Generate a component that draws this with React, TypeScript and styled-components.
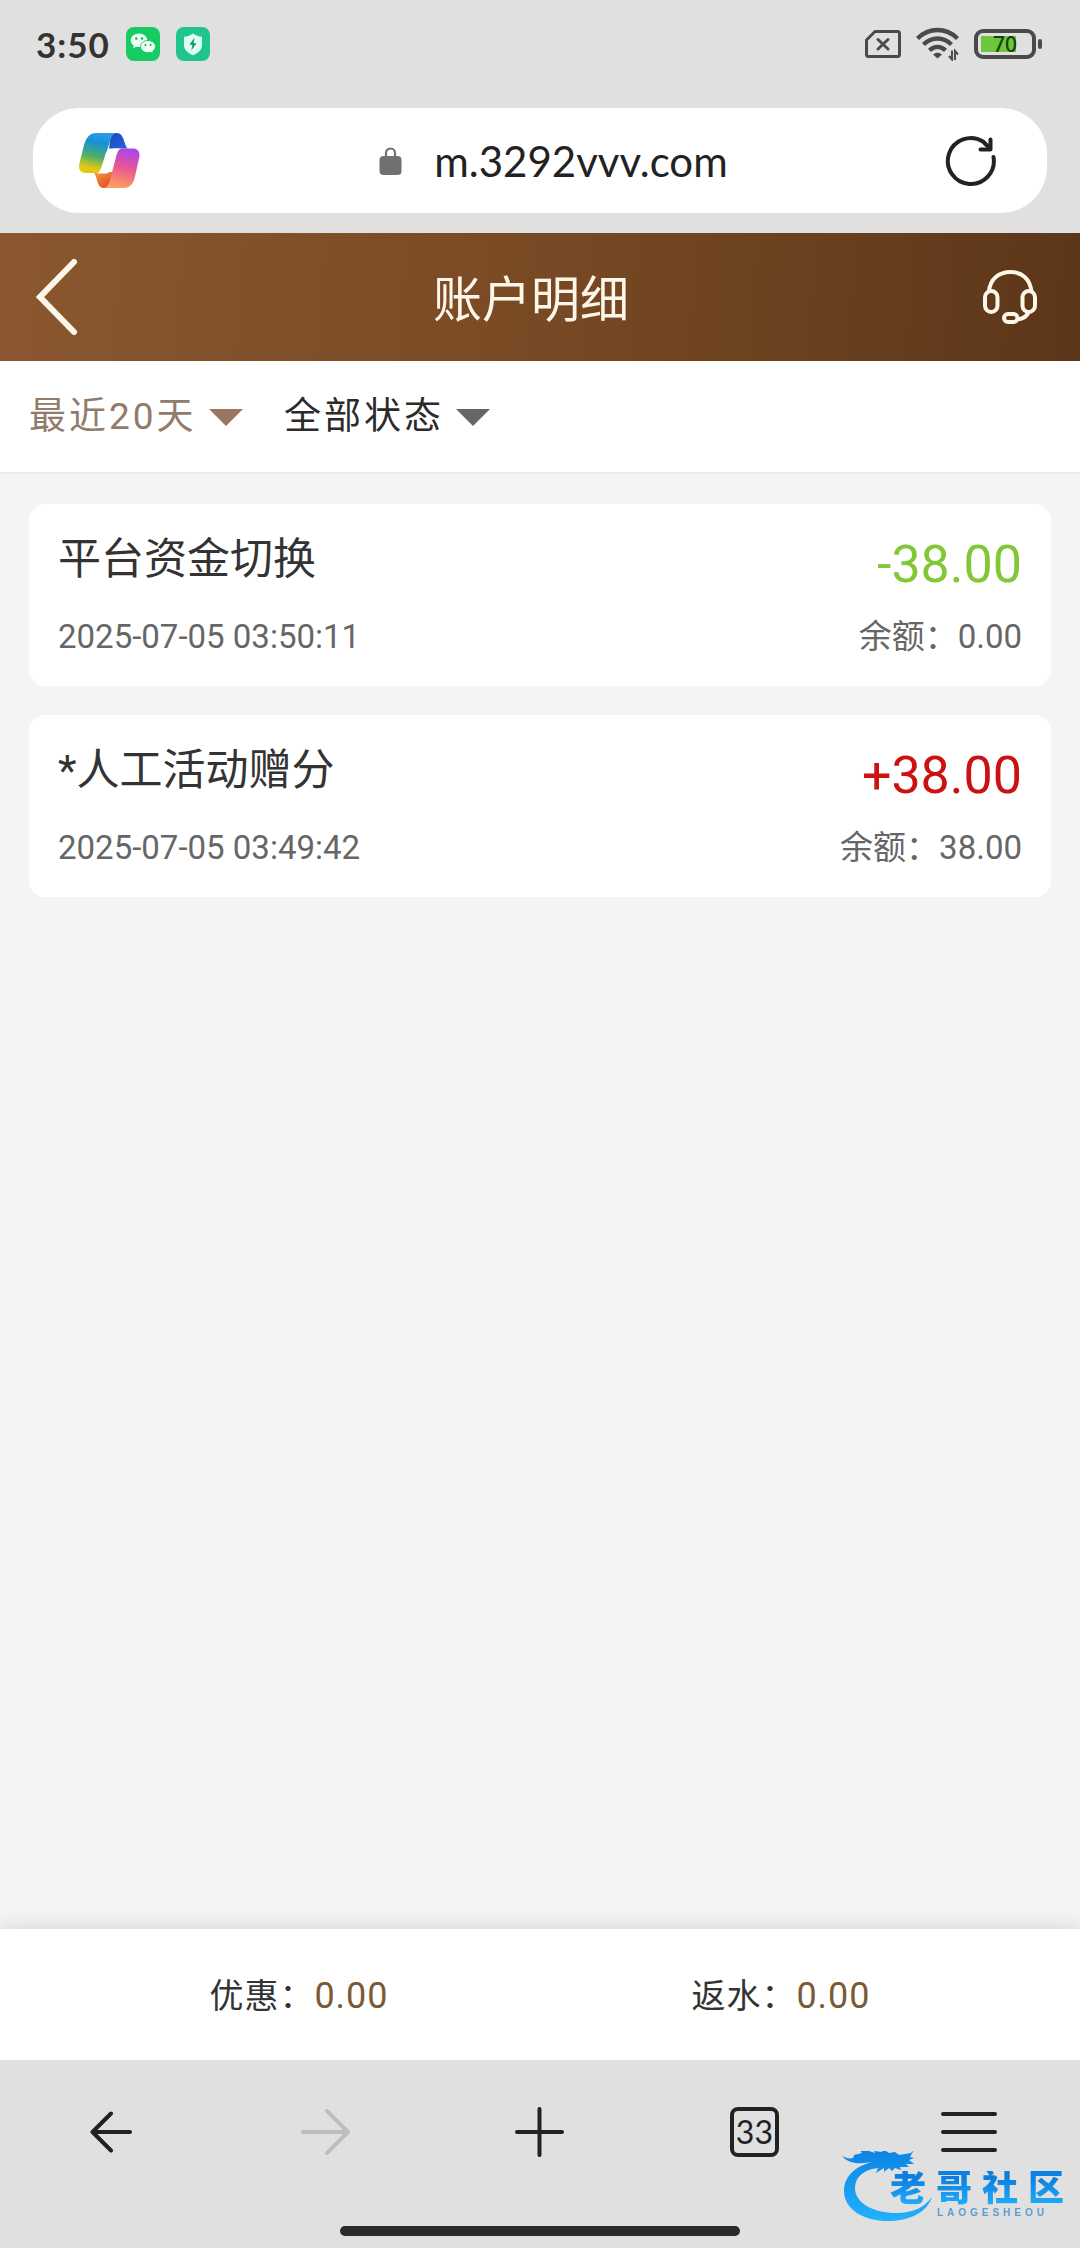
import React from "react";
import styled, { createGlobalStyle } from "styled-components";

const chrome = "#e0e0e0";
const ink = "#222222";
const cream = "#fff6ea";
const uiFont = `Roboto, "Noto Sans CJK SC", sans-serif`;
const systemFont = `Lato, "Noto Sans CJK SC", sans-serif`;

const GlobalStyle = createGlobalStyle`
  *, *::before, *::after { box-sizing: border-box; }
  body { margin: 0; background: #f3f4f6; font-family: ${uiFont}; }
  button, select { font: inherit; color: inherit; border: 0; background: none; padding: 0; margin: 0; }
  h1, h2, p, ul, dl, dd { margin: 0; padding: 0; font-weight: 400; }
  svg { display: block; }
`;

const Page = styled.div`
  position: relative;
  display: flex;
  flex-direction: column;
  min-height: 100vh;
`;

/* ---------- system status bar and address bar ---------- */

const BrowserTop = styled.header`
  background: ${chrome};
  padding-bottom: 20px;
`;

const StatusBar = styled.div`
  display: flex;
  align-items: center;
  justify-content: space-between;
  height: 88px;
  padding: 0 38px 0 36px;
`;

const StatusGroup = styled.div<{ $gap: number }>`
  display: flex;
  align-items: center;
  gap: ${(p) => p.$gap}px;
`;

const Clock = styled.time`
  font-family: ${systemFont};
  font-size: 35px;
  font-weight: 700;
  line-height: 40px;
  color: #333333;
  letter-spacing: 1px;
`;

const Battery = styled.div`
  display: flex;
  align-items: center;
  gap: 2px;
`;

const BatteryBody = styled.div`
  display: grid;
  place-items: center;
  width: 62px;
  height: 30px;
  border: 4px solid #4a4a4a;
  border-radius: 9px;
  font-family: "Noto Sans", sans-serif;
  font-size: 21px;
  font-weight: 500;
  line-height: 22px;
  color: #17400c;
  background: linear-gradient(90deg, #6cc83a 35px, transparent 35px) 3px 3px / 46px 16px no-repeat;
`;

const BatteryTip = styled.div`
  width: 4px;
  height: 10px;
  border-radius: 2px;
  background: #4a4a4a;
`;

const AddressBar = styled.div`
  display: flex;
  align-items: center;
  height: 105px;
  margin: 20px 33px 0;
  padding: 0 50px 0 46px;
  border-radius: 46px;
  background: #ffffff;
`;

const Address = styled.button`
  flex: 1;
  display: flex;
  align-items: center;
  justify-content: center;
  gap: 32px;
  padding-left: 22px;
  font-family: ${systemFont};
  font-size: 42px;
  line-height: 48px;
  color: ${ink};
`;

/* ---------- page header ---------- */

const TitleBar = styled.div`
  display: flex;
  align-items: center;
  justify-content: space-between;
  height: 128px;
  padding: 0 43px 0 36px;
  background: linear-gradient(95deg, #8a5730 0%, #7a4b25 45%, #6a401e 75%, #5c361a 100%);
  color: ${cream};
`;

const Title = styled.h1`
  padding-top: 8px;
  font-size: 49px;
  line-height: 60px;
`;

const Filters = styled.form`
  display: flex;
  gap: 41px;
  padding: 32px 29px 31px;
  background: #ffffff;
  border-bottom: 2px solid #ebecee;
`;

const Filter = styled.label<{ $color: string }>`
  display: flex;
  align-items: center;
  gap: 12px;
  color: ${(p) => p.$color};
`;

const FilterSelect = styled.select`
  appearance: none;
  font-size: 37px;
  line-height: 48px;
  letter-spacing: 3px;
`;

/* ---------- transaction list ---------- */

const Content = styled.main`
  flex: 1;
  padding: 30px 29px;
`;

const RecordList = styled.ul`
  display: flex;
  flex-direction: column;
  gap: 29px;
  list-style: none;
`;

const Record = styled.li`
  display: flex;
  flex-direction: column;
  gap: 12px;
  padding: 25px 29px 21px;
  border-radius: 16px;
  background: #ffffff;
`;

const RecordRow = styled.div`
  display: flex;
  align-items: flex-end;
  justify-content: space-between;
`;

const RecordTitle = styled.h2`
  font-size: 43px;
  line-height: 60px;
  padding-bottom: 8px;
  color: #333333;
`;

const Amount = styled.span<{ $positive: boolean }>`
  font-size: 52px;
  line-height: 64px;
  color: ${(p) => (p.$positive ? "#cc1111" : "#82c836")};
`;

const Meta = styled.span`
  font-size: 33px;
  line-height: 56px;
  color: #666666;
`;

/* ---------- totals ---------- */

const Totals = styled.dl`
  display: grid;
  grid-template-columns: 1fr 1fr;
  padding: 43px 58px 40px;
  background: #ffffff;
  box-shadow: 0 0 20px rgba(0, 0, 0, 0.14);
`;

const Total = styled.div`
  display: flex;
  justify-content: center;
  line-height: 48px;
`;

const TotalLabel = styled.dt`
  font-size: 34px;
  letter-spacing: 1px;
  color: #333333;
`;

const TotalValue = styled.dd`
  font-size: 36px;
  letter-spacing: 1px;
  color: #7b5937;
`;

/* ---------- browser toolbar ---------- */

const BrowserBottom = styled.footer`
  position: relative;
  padding-bottom: 12px;
  background: ${chrome};
`;

const Toolbar = styled.nav`
  display: grid;
  grid-template-columns: repeat(5, 1fr);
  padding: 33px 4px 0;
`;

const ToolButton = styled.button`
  display: grid;
  place-items: center;
  height: 78px;
  color: ${ink};

  &:disabled {
    color: #bdbdbd;
  }
`;

const TabCount = styled.span`
  display: grid;
  place-items: center;
  width: 49px;
  height: 50px;
  border: 4px solid ${ink};
  border-radius: 8px;
  font-family: ${systemFont};
  font-size: 32px;
  line-height: 40px;
`;

const HomeIndicator = styled.div`
  width: 37%;
  height: 10px;
  margin: 55px auto 0;
  border-radius: 5px;
  background: #2b2b2b;
`;

const IconButton = styled.button`
  display: grid;
  place-items: center;
`;

const Watermark = styled.div`
  position: absolute;
  right: 16px;
  bottom: 25px;
  display: flex;
  flex-direction: column;
  align-items: flex-end;
  width: 224px;
  height: 72px;
  padding-top: 20px;
  pointer-events: none;
`;

const WatermarkDragon = styled.svg`
  position: absolute;
  inset: 0;
`;

const WatermarkText = styled.div`
  position: relative;
  display: flex;
  gap: 10px;
  font-family: "Liberation Sans", "Noto Sans CJK SC", sans-serif;
  font-size: 36px;
  font-weight: 900;
  line-height: 36px;
  color: transparent;
  background: linear-gradient(#0c7fe0 20%, #20aaf8 90%);
  background-clip: text;
`;

const WatermarkLatin = styled.div`
  position: relative;
  padding-right: 16px;
  font-family: "Liberation Sans", sans-serif;
  font-size: 10px;
  font-weight: 700;
  line-height: 12px;
  letter-spacing: 4px;
  color: #5b9fd2;
`;

/* ---------- icons ---------- */

const WeChatIcon = () => (
  <svg width="34" height="34" viewBox="0 0 34 34" role="img" aria-label="WeChat">
    <rect width="34" height="34" rx="8" fill="#14cc62" />
    <path d="M13 6.500c-4.600 0-8.300 3-8.300 6.800 0 2.100 1.200 4 3.100 5.300l-.8 2.700 3.100-1.600c.9.300 1.900.4 2.900.4 4.600 0 8.300-3 8.300-6.800S17.600 6.500 13 6.500z" fill="#effff5" />
    <path d="M22 13.500c-4.200 0-7.500 2.700-7.500 6.100s3.300 6.100 7.500 6.100c.9 0 1.800-.1 2.600-.4l2.700 1.500-.7-2.400c1.700-1.100 2.900-2.800 2.900-4.800 0-3.400-3.300-6.100-7.500-6.100z" fill="#effff5" stroke="#14cc62" strokeWidth="1" />
    <g fill="#14a855">
      <circle cx="10.300" cy="11.500" r="1.200" />
      <circle cx="16" cy="11.500" r="1.200" />
      <circle cx="19.500" cy="18" r="1" />
      <circle cx="24.500" cy="18" r="1" />
    </g>
  </svg>
);

const ShieldIcon = () => (
  <svg width="34" height="34" viewBox="0 0 34 34" role="img" aria-label="Security">
    <rect width="34" height="34" rx="8" fill="#20c48e" />
    <path d="M17 6.500c2.600 2 5.500 3 9 3.300v8.700c0 4.500-4 7.500-9 9.800-5-2.300-9-5.300-9-9.800V9.800c3.500-.3 6.400-1.300 9-3.300z" fill="#dcfff3" />
    <path d="M18.500 10.500l-5 7.300h3l-1.200 5.700 5.200-7.300h-3z" fill="#178f69" />
  </svg>
);

const SimIcon = () => (
  <svg width="36" height="28" viewBox="0 0 36 28" fill="none" stroke="#4a4a4a" strokeWidth="3" strokeLinejoin="round" aria-hidden="true">
    <path d="M10 1.500h22.500a2 2 0 0 1 2 2v21a2 2 0 0 1-2 2h-29a2 2 0 0 1-2-2V10z" />
    <path d="M13 9.500l10 9.500M23 9.500l-10 9.500" strokeLinecap="round" />
  </svg>
);

const WifiIcon = () => (
  <svg width="43" height="34" viewBox="0 0 43 34" fill="none" stroke="#4a4a4a" strokeWidth="4.400" aria-hidden="true">
    <path d="M1.500 11.500C13 .2 30 .2 41.500 11.500" />
    <path d="M7.500 17.500c8.500-8 19.500-8 28 0" />
    <path d="M13.500 23.300c5-4.600 11-4.600 16 0" />
    <path d="M17 27.500c2.700-2.200 6.300-2.200 9 0L21.500 31.500z" fill="#4a4a4a" stroke="none" />
    <path d="M36 23.500v9l-3-3.500M39 33v-9l3 3.500" strokeWidth="2" />
  </svg>
);

const CopilotIcon = () => (
  <svg width="61" height="57" viewBox="0 0 61 57" aria-hidden="true">
    <defs>
      <linearGradient id="cpLeft" x1="0.600" y1="0" x2="0.400" y2="1">
        <stop offset="0" stopColor="#2b9fe6" />
        <stop offset="0.250" stopColor="#168fd8" />
        <stop offset="0.600" stopColor="#4bb06a" />
        <stop offset="0.900" stopColor="#e2ca12" />
      </linearGradient>
      <linearGradient id="cpTop" x1="0" y1="0" x2="1" y2="1">
        <stop offset="0" stopColor="#1b48b8" />
        <stop offset="1" stopColor="#2a62e4" />
      </linearGradient>
      <linearGradient id="cpRight" x1="0.600" y1="0" x2="0.400" y2="1">
        <stop offset="0" stopColor="#a848ea" />
        <stop offset="0.450" stopColor="#e85598" />
        <stop offset="1" stopColor="#ffa05a" />
      </linearGradient>
      <linearGradient id="cpBottom" x1="0" y1="0" x2="1" y2="1">
        <stop offset="0" stopColor="#f8a038" />
        <stop offset="1" stopColor="#d83a28" />
      </linearGradient>
    </defs>
    <path d="M32 1h5c4 0 6 2 7.500 6l2 6c.7 2 1.500 3.300 3 3.500H30z" fill="url(#cpTop)" />
    <path d="M14 40c1.500 1 2.200 2.500 3 5l1.500 5c1.500 4.500 3 6 7 6h4l8-16z" fill="url(#cpBottom)" />
    <path d="M17 1h22c-5 0-6.500 3-8 8l-7 23c-2 6-3.500 9-7 9H7c-6 0-8-4-6.500-10L5 13C7.500 5 11 1 17 1z" fill="url(#cpLeft)" />
    <path d="M45 56H23c5 0 6.500-3 8-8l6-23c1.600-6 3-8.500 7-8.500h9.500c6 0 8 4 6.500 10l-4 18C54.300 52 51 56 45 56z" fill="url(#cpRight)" />
    <path d="M38 16.500h5c-4 0-5.400 2.500-7 8.500l-3 10c-1.300 4-3 6.500-7 6.500h-9c3.500-.5 4.500-3.500 6.500-9.500l3-10c1.300-4 5-5.500 11.500-5.500z" fill="#ffffff" />
  </svg>
);

const LockIcon = () => (
  <svg width="23" height="28" viewBox="0 0 23 28" aria-hidden="true">
    <rect x="0.500" y="9" width="22" height="19" rx="4" fill="#707070" />
    <path d="M7 10V6a4.500 4.500 0 0 1 9 0v4" fill="none" stroke="#707070" strokeWidth="2.200" />
  </svg>
);

const ReloadIcon = () => (
  <svg width="52" height="52" viewBox="0 0 52 52" fill="none" stroke={ink} strokeWidth="4" strokeLinecap="round" strokeLinejoin="round" aria-hidden="true">
    <path d="M48.500 22A23 23 0 1 1 38 6.500L45 13.500" />
    <path d="M45.500 4.500v10h-10" />
  </svg>
);

const ChevronIcon = () => (
  <svg width="43" height="76" viewBox="0 0 43 76" fill="none" stroke={cream} strokeWidth="6" strokeLinecap="round" aria-hidden="true">
    <path d="M38 3L4 38l34 35" />
  </svg>
);

const HeadsetIcon = () => (
  <svg width="54" height="54" viewBox="0 0 54 54" fill="none" stroke={cream} strokeWidth="4" aria-hidden="true">
    <path d="M6 21.500C7 9 16 2 27.500 2S47 9 48.500 21.500" />
    <rect x="2" y="21" width="12.500" height="21" rx="6.200" />
    <rect x="39.500" y="21" width="12.500" height="21" rx="6.200" />
    <rect x="21" y="44" width="13.500" height="8" rx="4" />
    <path d="M34.500 49.500c5-.5 9.500-3 11.500-8" />
  </svg>
);

const Triangle = ({ color }: { color: string }) => (
  <svg width="34" height="17" viewBox="0 0 34 17" aria-hidden="true">
    <path d="M0 0h34L17 17z" fill={color} />
  </svg>
);

const stroke = {
  fill: "none",
  stroke: "currentColor",
  strokeWidth: 4,
  strokeLinecap: "round" as const,
  strokeLinejoin: "round" as const,
  "aria-hidden": true,
};

const BackIcon = () => (
  <svg width="43" height="42" viewBox="0 0 43 42" {...stroke}>
    <path d="M40 21H3M21 2.500L2.500 21 21 39.500" />
  </svg>
);

const ForwardIcon = () => (
  <svg width="50" height="46" viewBox="0 0 50 46" {...stroke}>
    <path d="M2 23h45M26 2l21 21-21 21" />
  </svg>
);

const PlusIcon = () => (
  <svg width="49" height="50" viewBox="0 0 49 50" {...stroke}>
    <path d="M2 25h45M24.500 2v46" />
  </svg>
);

const MenuIcon = () => (
  <svg width="56" height="42" viewBox="0 0 56 42" {...stroke}>
    <path d="M2 3h52M2 21h52M2 39h52" />
  </svg>
);

const Dragon = () => (
  <WatermarkDragon width="224" height="72" viewBox="0 0 224 72" aria-hidden="true">
    <defs>
      <linearGradient id="dragon" x1="0" y1="0" x2="0" y2="1">
        <stop offset="0" stopColor="#0c82e4" />
        <stop offset="1" stopColor="#22b2fc" />
      </linearGradient>
    </defs>
    <path
      fill="url(#dragon)"
      d="M32 11C13 16 4 27 4 40c0 19 21 31 47 30 20-1 36-9 41-24-8 11-20 16-35 16-24 0-42-10-42-25 0-9 6-16 17-19l6-1-2 5 8-5 0 4 5-4 3 3 3-3 6 2-1-3 9 0-3-3 8 0-5-4 5-2-4-1 4-7-3 3-12 2-4-3-6 1-6-4-1 3-8-1 1 2-9-3-8-2 4 5-8 2C14 9 8 8 2 5c5 6 13 8 22 7z"
    />
  </WatermarkDragon>
);

/* ---------- data ---------- */

const records = [
  { title: "平台资金切换", time: "2025-07-05 03:50:11", amount: "-38.00", balance: "0.00" },
  { title: "*人工活动赠分", time: "2025-07-05 03:49:42", amount: "+38.00", balance: "38.00" },
];

const totals = [
  { label: "优惠：", value: "0.00" },
  { label: "返水：", value: "0.00" },
];

export default function App() {
  return (
    <Page>
      <GlobalStyle />
      <BrowserTop>
        <StatusBar>
          <StatusGroup $gap={16}>
            <Clock>3:50</Clock>
            <WeChatIcon />
            <ShieldIcon />
          </StatusGroup>
          <StatusGroup $gap={15}>
            <SimIcon />
            <WifiIcon />
            <Battery>
              <BatteryBody>70</BatteryBody>
              <BatteryTip />
            </Battery>
          </StatusGroup>
        </StatusBar>
        <AddressBar>
          <IconButton aria-label="Copilot">
            <CopilotIcon />
          </IconButton>
          <Address>
            <LockIcon />
            <span>m.3292vvv.com</span>
          </Address>
          <IconButton aria-label="Reload">
            <ReloadIcon />
          </IconButton>
        </AddressBar>
      </BrowserTop>

      <TitleBar>
        <IconButton aria-label="返回">
          <ChevronIcon />
        </IconButton>
        <Title>账户明细</Title>
        <IconButton aria-label="客服">
          <HeadsetIcon />
        </IconButton>
      </TitleBar>

      <Filters>
        <Filter $color="#937b6b">
          <FilterSelect aria-label="时间">
            <option>最近20天</option>
          </FilterSelect>
          <Triangle color="#9a7560" />
        </Filter>
        <Filter $color="#2b2b2b">
          <FilterSelect aria-label="状态">
            <option>全部状态</option>
          </FilterSelect>
          <Triangle color="#666666" />
        </Filter>
      </Filters>

      <Content>
        <RecordList>
          {records.map((r) => (
            <Record key={r.time}>
              <RecordRow>
                <RecordTitle>{r.title}</RecordTitle>
                <Amount $positive={r.amount.startsWith("+")}>{r.amount}</Amount>
              </RecordRow>
              <RecordRow>
                <Meta as="time">{r.time}</Meta>
                <Meta>余额：{r.balance}</Meta>
              </RecordRow>
            </Record>
          ))}
        </RecordList>
      </Content>

      <Totals>
        {totals.map((t) => (
          <Total key={t.label}>
            <TotalLabel>{t.label}</TotalLabel>
            <TotalValue>{t.value}</TotalValue>
          </Total>
        ))}
      </Totals>

      <BrowserBottom>
        <Toolbar>
          <ToolButton aria-label="Back">
            <BackIcon />
          </ToolButton>
          <ToolButton aria-label="Forward" disabled>
            <ForwardIcon />
          </ToolButton>
          <ToolButton aria-label="New tab">
            <PlusIcon />
          </ToolButton>
          <ToolButton aria-label="Tabs">
            <TabCount>33</TabCount>
          </ToolButton>
          <ToolButton aria-label="Menu">
            <MenuIcon />
          </ToolButton>
        </Toolbar>
        <HomeIndicator />
        <Watermark>
          <Dragon />
          <WatermarkText>
            <span>老</span>
            <span>哥</span>
            <span>社</span>
            <span>区</span>
          </WatermarkText>
          <WatermarkLatin>LAOGESHEOU</WatermarkLatin>
        </Watermark>
      </BrowserBottom>
    </Page>
  );
}
